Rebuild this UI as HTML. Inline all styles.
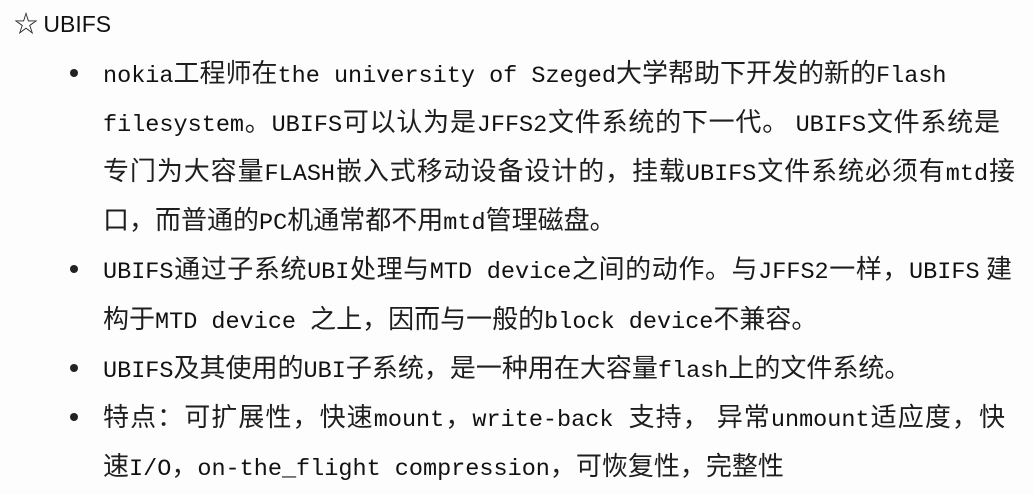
<!DOCTYPE html>
<html><head><meta charset="utf-8"><style>
html,body{margin:0;padding:0;background:#fdfdfd;}
body{width:1034px;height:492px;position:relative;overflow:hidden;color:#1e1e1e;
font-family:"Noto Sans CJK SC","WenQuanYi Zen Hei",sans-serif;font-size:26px;}
.l{position:absolute;left:103px;height:49px;line-height:49px;white-space:nowrap;}
.j{text-align:justify;text-align-last:justify;}
i{font-style:normal;font-family:"Liberation Mono",monospace;font-size:23.5px;color:#111;}
.b{position:absolute;left:70px;width:8px;height:8px;border-radius:50%;background:#222;}
.t{position:absolute;left:14px;top:6px;font-size:24px;line-height:32px;}
.t i{font-size:23px;font-family:"Liberation Sans",sans-serif;}
</style></head><body>
<div class="t">☆ <i>UBIFS</i></div>
<div class="b" style="top:69px"></div>
<div class="l" style="top:47px"><i>nokia</i>工程师在<i>the university of Szeged</i>大学帮助下开发的新的<i>Flash</i></div>
<div class="l j" style="top:96px;width:897px"><i>filesystem</i>。<i>UBIFS</i>可以认为是<i>JFFS2</i>文件系统的下一代。 <i>UBIFS</i>文件系统是</div>
<div class="l j" style="top:145px;width:912px">专门为大容量<i>FLASH</i>嵌入式移动设备设计的，挂载<i>UBIFS</i>文件系统必须有<i>mtd</i>接</div>
<div class="l" style="top:194px">口，而普通的<i>PC</i>机通常都不用<i>mtd</i>管理磁盘。</div>
<div class="b" style="top:265px"></div>
<div class="l j" style="top:243px;width:909px"><i>UBIFS</i>通过子系统<i>UBI</i>处理与<i>MTD device</i>之间的动作。与<i>JFFS2</i>一样，<i>UBIFS</i> 建</div>
<div class="l" style="top:293px">构于<i>MTD device </i>之上，因而与一般的<i>block device</i>不兼容。</div>
<div class="b" style="top:364px"></div>
<div class="l" style="top:342px"><i>UBIFS</i>及其使用的<i>UBI</i>子系统，是一种用在大容量<i>flash</i>上的文件系统。</div>
<div class="b" style="top:413px"></div>
<div class="l j" style="top:391px;width:902px">特点：可扩展性，快速<i>mount</i>，<i>write-back </i>支持， 异常<i>unmount</i>适应度，快</div>
<div class="l" style="top:440px">速<i>I/O</i>，<i>on-the_flight compression</i>，可恢复性，完整性</div>
</body></html>
